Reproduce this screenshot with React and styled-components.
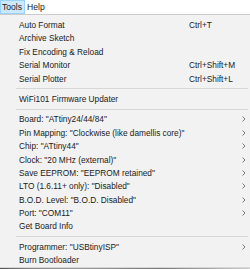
import React from 'react'
import styled, { createGlobalStyle } from 'styled-components';

const GlobalStyle = createGlobalStyle`
  html, body {
    margin: 0;
    padding: 0;
    background: #ffffff;
  }
`;

const sections = [
  [
    { label: 'Auto Format', shortcut: 'Ctrl+T' },
    { label: 'Archive Sketch' },
    { label: 'Fix Encoding & Reload' },
    { label: 'Serial Monitor', shortcut: 'Ctrl+Shift+M' },
    { label: 'Serial Plotter', shortcut: 'Ctrl+Shift+L' },
  ],
  [{ label: 'WiFi101 Firmware Updater' }],
  [
    { label: 'Board: "ATtiny24/44/84"', sub: true },
    { label: 'Pin Mapping: "Clockwise (like damellis core)"', sub: true },
    { label: 'Chip: "ATtiny44"', sub: true },
    { label: 'Clock: "20 MHz (external)"', sub: true },
    { label: 'Save EEPROM: "EEPROM retained"', sub: true },
    { label: 'LTO (1.6.11+ only): "Disabled"', sub: true },
    { label: 'B.O.D. Level: "B.O.D. Disabled"', sub: true },
    { label: 'Port: "COM11"', sub: true },
    { label: 'Get Board Info' },
  ],
  [
    { label: 'Programmer: "USBtinyISP"', sub: true },
    { label: 'Burn Bootloader' },
  ],
];

function Chevron() {
  return (
    <svg width="4" height="6" viewBox="0 0 4 6">
      <polyline points="0.5,0.5 3,3 0.5,5.5" fill="none" stroke="#6b6b6b" strokeWidth="0.9" />
    </svg>
  );
}

function App() {
  return (
    <Screen>
      <GlobalStyle />
      <MenuBar>
        <MenuTitle active>Tools</MenuTitle>
        <MenuTitle>Help</MenuTitle>
      </MenuBar>
      <Dropdown>
        {sections.map((items, i) => (
          <React.Fragment key={i}>
            {i > 0 && <Separator />}
            {items.map((item) => (
              <Item key={item.label}>
                <Label>{item.label}</Label>
                <Shortcut>{item.shortcut}</Shortcut>
                <Arrow>{item.sub && <Chevron />}</Arrow>
              </Item>
            ))}
          </React.Fragment>
        ))}
      </Dropdown>
      <Behind />
    </Screen>
  );
}

export default App;

const Screen = styled.div`
  width: 250px;
  height: 269px;
  overflow: hidden;
  display: flex;
  flex-direction: column;
  font-family: "Liberation Sans", Arial, sans-serif;
  font-size: 8.3px;
  color: #1a1a1a;
`;

const MenuBar = styled.div`
  height: 14px;
  flex: none;
  display: flex;
  align-items: stretch;
  background: #ffffff;
`;

const MenuTitle = styled.div`
  display: flex;
  align-items: center;
  padding: 0 2px 0 1px;
  box-sizing: border-box;
  background: ${(p) => (p.active ? '#cce8ff' : 'transparent')};
  border: 1px solid ${(p) => (p.active ? '#99d1ff' : 'transparent')};
  font-size: 8.6px;
`;

const Dropdown = styled.div`
  flex: 1;
  background: #f2f2f2;
  border-top: 1px solid #cccccc;
  border-bottom: 1px solid #d6d6d6;
  padding: 3.3px 0 0;
  box-sizing: border-box;
`;

const Item = styled.div`
  height: 13.4px;
  display: grid;
  grid-template-columns: 1fr 51px 10px;
  align-items: center;
  padding-left: 19px;
  white-space: nowrap;
`;

const Label = styled.span``;

const Shortcut = styled.span``;

const Arrow = styled.span`
  display: flex;
  align-items: center;
  padding-left: 2px;
`;

const Separator = styled.div`
  height: 7px;
  margin-left: 16px;
  margin-right: 2px;
  display: flex;
  align-items: center;

  &::after {
    content: '';
    flex: 1;
    height: 1px;
    background: #d7d7d7;
  }
`;

const Behind = styled.div`
  height: 2px;
  flex: none;
  background: linear-gradient(90deg, #555 0, #888 30px, #9a9a9a 80px, #7a7a7a 160px, #cfcfcf 250px);
`;
